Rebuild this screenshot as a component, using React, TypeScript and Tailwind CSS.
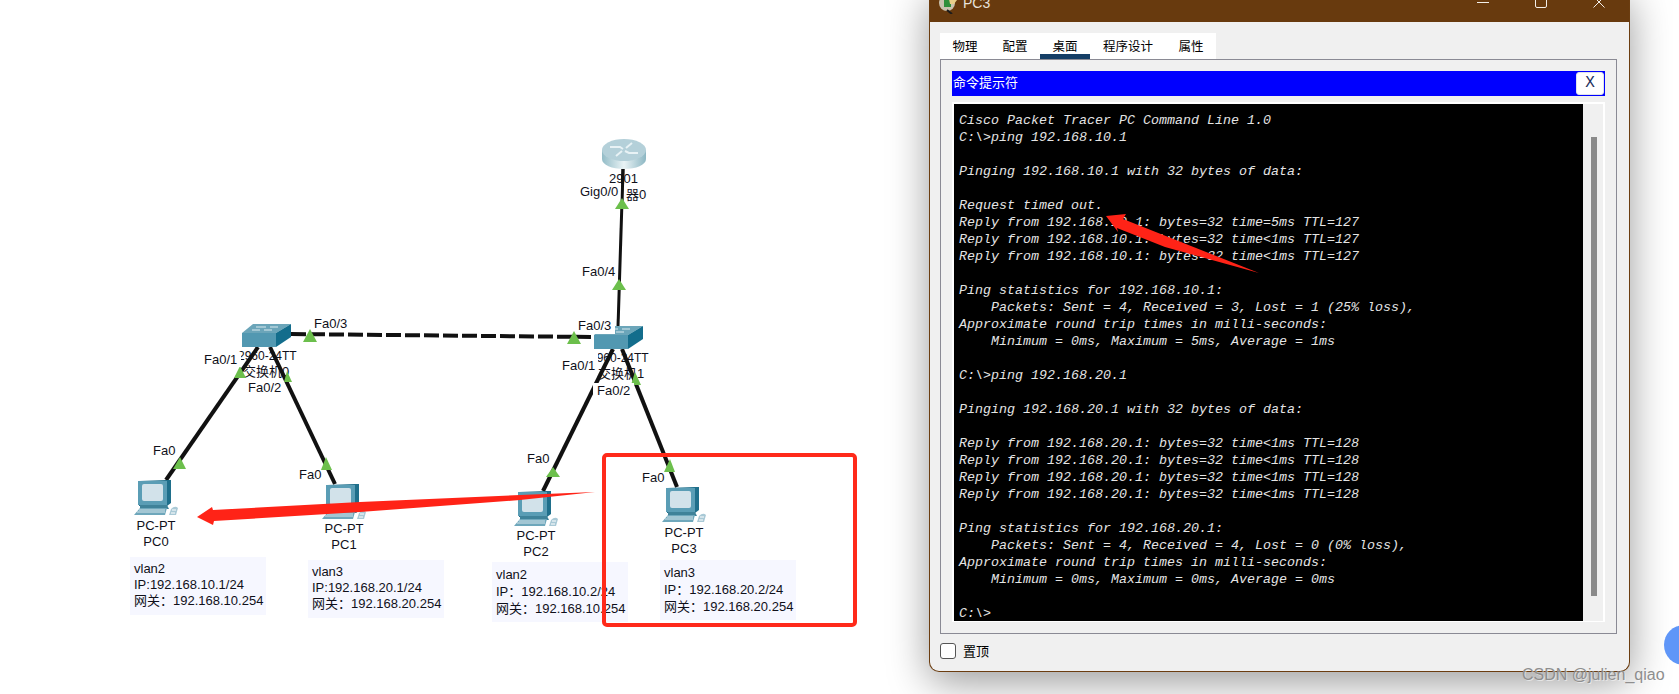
import React from "react"

const terminalLines = [
  "Cisco Packet Tracer PC Command Line 1.0",
  "C:\\>ping 192.168.10.1",
  "",
  "Pinging 192.168.10.1 with 32 bytes of data:",
  "",
  "Request timed out.",
  "Reply from 192.168.10.1: bytes=32 time=5ms TTL=127",
  "Reply from 192.168.10.1: bytes=32 time<1ms TTL=127",
  "Reply from 192.168.10.1: bytes=32 time<1ms TTL=127",
  "",
  "Ping statistics for 192.168.10.1:",
  "    Packets: Sent = 4, Received = 3, Lost = 1 (25% loss),",
  "Approximate round trip times in milli-seconds:",
  "    Minimum = 0ms, Maximum = 5ms, Average = 1ms",
  "",
  "C:\\>ping 192.168.20.1",
  "",
  "Pinging 192.168.20.1 with 32 bytes of data:",
  "",
  "Reply from 192.168.20.1: bytes=32 time<1ms TTL=128",
  "Reply from 192.168.20.1: bytes=32 time<1ms TTL=128",
  "Reply from 192.168.20.1: bytes=32 time<1ms TTL=128",
  "Reply from 192.168.20.1: bytes=32 time<1ms TTL=128",
  "",
  "Ping statistics for 192.168.20.1:",
  "    Packets: Sent = 4, Received = 4, Lost = 0 (0% loss),",
  "Approximate round trip times in milli-seconds:",
  "    Minimum = 0ms, Maximum = 0ms, Average = 0ms",
  "",
  "C:\\>",
]

const tabs = [
  { name: "物理", width: "w-[50px]", active: false },
  { name: "配置", width: "w-[50px]", active: false },
  { name: "桌面", width: "w-[50px]", active: true },
  { name: "程序设计", width: "w-[76px]", active: false },
  { name: "属性", width: "w-[50px]", active: false },
]

const portLabels = [
  { text: "Fa0/3", pos: "left-[314px] top-[316px]" },
  { text: "Fa0/1", pos: "left-[204px] top-[352px] pr-1 bg-white" },
  { text: "Fa0/2", pos: "left-[248px] top-[380px]" },
  { text: "Fa0", pos: "left-[153px] top-[443px]" },
  { text: "Fa0", pos: "left-[299px] top-[467px]" },
  { text: "Gig0/0", pos: "left-[580px] top-[184px] pr-[8px] pb-[4px] bg-white" },
  { text: "Fa0/4", pos: "left-[582px] top-[264px]" },
  { text: "Fa0/3", pos: "left-[578px] top-[318px] pr-1 pb-[1px] bg-white" },
  { text: "Fa0/1", pos: "left-[562px] top-[353px] pt-[5px] pr-[3px] bg-white" },
  { text: "Fa0/2", pos: "left-[593px] top-[383px] px-1 bg-white" },
  { text: "Fa0", pos: "left-[527px] top-[451px]" },
  { text: "Fa0", pos: "left-[642px] top-[470px]" },
]

const deviceLabels = [
  { text: "2901", pos: "left-[609px] top-[171px]" },
  { text: "路由器0", pos: "left-[600px] top-[187px]" },
  { text: "2960-24TT", pos: "left-[238px] top-[349px] text-[12px]" },
  { text: "交换机0", pos: "left-[243px] top-[364px]" },
  { text: "2960-24TT", pos: "left-[590px] top-[351px] text-[12px]" },
  { text: "交换机1", pos: "left-[598px] top-[366px]" },
]

const pcs = [
  { name: "PC0", icon: "left-[134px] top-[480px]", label: "left-[116px] top-[518px]" },
  { name: "PC1", icon: "left-[322px] top-[484px]", label: "left-[304px] top-[521px]" },
  { name: "PC2", icon: "left-[514px] top-[491px]", label: "left-[496px] top-[528px]" },
  { name: "PC3", icon: "left-[662px] top-[487px]", label: "left-[644px] top-[525px]" },
]

const infoBoxes = [
  { pos: "left-[130px] top-[557px] h-[58px] pt-1 leading-4", lines: ["vlan2", "IP:192.168.10.1/24", "网关\uFF1A192.168.10.254"] },
  { pos: "left-[308px] top-[560px] h-[58px] pt-1 leading-4", lines: ["vlan3", "IP:192.168.20.1/24", "网关\uFF1A192.168.20.254"] },
  { pos: "left-[492px] top-[562px] h-[60px] pt-[4px] leading-[17px]", lines: ["vlan2", "IP\uFF1A192.168.10.2/24", "网关\uFF1A192.168.10.254"] },
  { pos: "left-[660px] top-[560px] h-[60px] pt-1 leading-[17px]", lines: ["vlan3", "IP\uFF1A192.168.20.2/24", "网关\uFF1A192.168.20.254"] },
]

const triangles = [
  "310,329 317,342 303,342",
  "240,366 246,378 234,378",
  "287,371 292,382 284,382",
  "180,457 186,469 173,469",
  "326,457 332,470 321,470",
  "619,279 626,290 612,290",
  "574,331 581,344 567,344",
  "635,372 641,385 631,385",
  "553,467 560,477 546,477",
  "670,459 675,472 664,472",
]

function PcIcon() {
  return (
    <svg width="44" height="37" viewBox="0 0 44 37">
      <path d="M5 1 L33 0 L37 0 L37 23 L33 26 L5 26 Z" fill="#1f6f8b" />
      <path d="M4 1 H33 V25 H4 Z" fill="#5a9db5" />
      <rect x="8" y="4" width="21" height="17" rx="2" fill="#d2e2ea" />
      <path d="M6 25 H33 L35 29 H6 Z" fill="#3f8299" />
      <path d="M6 28 H33 L31 35 H0 Z" fill="#6ea7bb" />
      <path d="M5 30 H31 M3 32 H31" stroke="#d7e6ec" strokeWidth="1" />
      <path d="M37 29 Q41 25 44 28 L42 35 H35 Z" fill="#a9c9d6" />
      <path d="M37 33 H41 M38 30 H42" stroke="#ffffff" strokeWidth="1" />
    </svg>
  )
}

function SwitchIcon() {
  return (
    <svg width="49" height="23" viewBox="0 0 49 23">
      <path d="M0 9 L11 0 H49 L34 9 Z" fill="#6ba5b9" />
      <path d="M0 9 H34 V23 H0 Z" fill="#5298b1" />
      <path d="M34 9 L49 0 V13 L34 23 Z" fill="#136d8c" />
      <path d="M14 3 H24 M28 3 H36 M10 6 H18 M22 6 H30" stroke="#dcebf0" strokeWidth="1" />
    </svg>
  )
}

function RouterIcon() {
  return (
    <svg width="44" height="30" viewBox="0 0 44 30">
      <defs>
        <linearGradient id="routerBody" x1="0" y1="0" x2="1" y2="0">
          <stop offset="0" stopColor="#93bcc7" />
          <stop offset="0.5" stopColor="#e9f3f5" />
          <stop offset="1" stopColor="#8db7c3" />
        </linearGradient>
      </defs>
      <path d="M0 11 V20 C0 26 10 30 22 30 C34 30 44 26 44 20 V11 Z" fill="url(#routerBody)" />
      <ellipse cx="22" cy="11" rx="22" ry="11" fill="#b4d0d9" />
      <path d="M8 8 H18 L21 10 M36 14 H27 L23 12 M14 17 L20 12 M30 4 L24 9" stroke="#e8f2f5" strokeWidth="2" fill="none" />
    </svg>
  )
}

function PcAppIcon() {
  return (
    <svg width="20" height="14" viewBox="0 0 20 14">
      <circle cx="9" cy="3" r="8" fill="#c9c2ae" />
      <rect x="6" y="0" width="7" height="7" fill="#2f8f3a" />
      <path d="M11 -1 L19 0 L16 4 L12 4 Z" fill="#e8cf8a" />
      <path d="M9 10 L14 14" stroke="#1c1c1c" strokeWidth="2" />
    </svg>
  )
}

function CommandWindow() {
  return (
    <div className="absolute left-[929px] top-[-10px] w-[701px] h-[682px] flex flex-col bg-[#f0f0f0] border border-t-0 border-[#6b3d10] rounded-b-[10px] shadow-[0_10px_40px_rgba(0,0,0,0.4)]">
      <div className="h-[32px] shrink-0 bg-[#683a0e] flex items-start pt-[10px] pl-[8px] pr-[24px]">
        <PcAppIcon />
        <span className="ml-[5px] -mt-[6px] text-[14px] leading-[18px] text-[#e9e3dc] font-['Liberation_Sans',sans-serif]">PC3</span>
        <div className="ml-auto flex items-start gap-[46px] text-[#f3eee8]">
          <svg width="12" height="12" viewBox="0 0 12 12">
            <path d="M0 2.5 H12" stroke="currentColor" strokeWidth="1" />
          </svg>
          <svg width="12" height="12" viewBox="0 0 12 12" className="-mt-[4px]">
            <rect x="0.5" y="0.5" width="11" height="11" rx="1.5" fill="none" stroke="currentColor" />
          </svg>
          <svg width="12" height="12" viewBox="0 0 12 12" className="-mt-[4px]">
            <path d="M0.5 0.5 L11.5 11.5 M11.5 0.5 L0.5 11.5" stroke="currentColor" strokeWidth="1" />
          </svg>
        </div>
      </div>

      <div className="flex-1 flex flex-col pt-[11px] px-[10px] font-['Liberation_Sans','Noto_Sans_CJK_SC',sans-serif]">
        <div className="flex w-[276px] h-[26px] bg-white text-[12.5px] text-black">
          {tabs.map((tab) => (
            <div
              key={tab.name}
              className={`${tab.width} flex justify-center pt-[6px] leading-[17px] ${
                tab.active ? "border-b-[5px] border-[#153e66]" : ""
              }`}
            >
              {tab.name}
            </div>
          ))}
        </div>

        <div className="w-[677px] h-[575px] border border-[#8a8a94] px-[11px] pt-[11px]">
          <div className="h-[25px] bg-[#0000ff] flex items-center justify-between pl-[1px] pr-[1px]">
            <span className="text-[13px] text-white leading-none -mt-[3px]">命令提示符</span>
            <span className="w-[28px] h-[23px] bg-white rounded-[3px] border border-[#dfe3ea] flex items-center justify-center text-[16px] text-[#1c2f5c] font-['Liberation_Mono',monospace]">
              X
            </span>
          </div>
          <div className="mt-[6px] h-[520px] bg-white pl-[2px] pt-[2px] pr-[2px] pb-[1px] flex">
            <pre className="w-[629px] h-full bg-black pt-[8px] pl-[5px] overflow-hidden text-[13.33px] leading-[17px] italic text-[#e4e4e4] font-['Liberation_Mono',monospace]">
              {terminalLines.join("\n")}
            </pre>
            <div className="flex-1 bg-[#f0f0f0] pl-[8px] pt-[33px]">
              <div className="w-[6px] h-[459px] bg-[#8a8a8a]" />
            </div>
          </div>
        </div>

        <div className="mt-[9px] flex items-center gap-[7px] text-[13px] text-black">
          <span className="w-[16px] h-[16px] bg-white border border-[#555] rounded-[3px]" />
          <span>置顶</span>
        </div>
      </div>
    </div>
  )
}

export default function App() {
  return (
    <div className="relative w-[1679px] h-[694px] overflow-hidden bg-white text-[13px] leading-[15px] text-[#10101a] font-['Liberation_Sans','Noto_Sans_CJK_SC',sans-serif]">
      {deviceLabels.map((d) => (
        <span key={d.pos} className={`absolute whitespace-nowrap ${d.pos}`}>
          {d.text}
        </span>
      ))}

      {/* links between devices */}
      <svg className="absolute left-0 top-0" width="1679" height="694" viewBox="0 0 1679 694">
        <g stroke="#111111" strokeWidth="4" fill="none">
          <path d="M258 347 L166 480" />
          <path d="M270 347 L335 484" />
          <path d="M623 169 L618 327" strokeWidth="3" />
          <path d="M613 349 L543 491" />
          <path d="M622 349 L677 487" />
          <path d="M291 334 L594 337" strokeDasharray="15 4" />
        </g>
        {triangles.map((t) => (
          <polygon key={t} points={t} fill="#6cbf4c" />
        ))}
      </svg>

      <div className="absolute left-[602px] top-[139px]">
        <RouterIcon />
      </div>
      <div className="absolute left-[242px] top-[324px]">
        <SwitchIcon />
      </div>
      <div className="absolute left-[594px] top-[326px]">
        <SwitchIcon />
      </div>

      {portLabels.map((p) => (
        <span key={p.pos} className={`absolute whitespace-nowrap ${p.pos}`}>
          {p.text}
        </span>
      ))}

      {/* router link sits over the Gig0/0 label mask */}
      <svg className="absolute left-[610px] top-[165px]" width="30" height="50" viewBox="610 165 30 50">
        <path d="M623 169 L622 205" stroke="#111111" strokeWidth="3" fill="none" />
        <polygon points="622,198 629,209 615,209" fill="#6cbf4c" />
      </svg>

      {pcs.map((pc) => (
        <React.Fragment key={pc.name}>
          <div className={`absolute ${pc.icon}`}>
            <PcIcon />
          </div>
          <div className={`absolute w-[80px] text-center leading-4 ${pc.label}`}>
            <div>PC-PT</div>
            <div>{pc.name}</div>
          </div>
        </React.Fragment>
      ))}

      {infoBoxes.map((box) => (
        <div key={box.pos} className={`absolute w-[136px] bg-[#f6f7ff] pl-[4px] ${box.pos}`}>
          {box.lines.map((line) => (
            <div key={line} className="whitespace-nowrap">
              {line}
            </div>
          ))}
        </div>
      ))}

      <CommandWindow />

      {/* edge of the captured screen */}
      <div className="absolute right-0 top-0 w-[6px] h-full bg-white" />

      <div className="absolute left-[602px] top-[453px] w-[255px] h-[174px] border-4 border-[#ff2a1a] rounded-[5px]" />

      {/* hand drawn red arrows */}
      <svg className="absolute left-0 top-0" width="1679" height="694" viewBox="0 0 1679 694">
        <polygon points="197,517 212,507 213,510 360,502 520,495 595,492 520,500 360,512 214,521 213,525" fill="#ff2317" />
        <polygon points="1106,216 1126,214 1123,219 1259,273 1165,247 1117,228 1118,232" fill="#ff2317" />
      </svg>

      <div className="absolute left-[1664px] top-[625px] w-[40px] h-[40px] rounded-full bg-[#5f96f8]" />

      <span className="absolute left-[1522px] top-[666px] text-[16px] leading-[18px] whitespace-nowrap text-[#8e8e8e] [text-shadow:1px_1px_0_rgba(255,255,255,0.5)]">
        CSDN @julien_qiao
      </span>
    </div>
  )
}
